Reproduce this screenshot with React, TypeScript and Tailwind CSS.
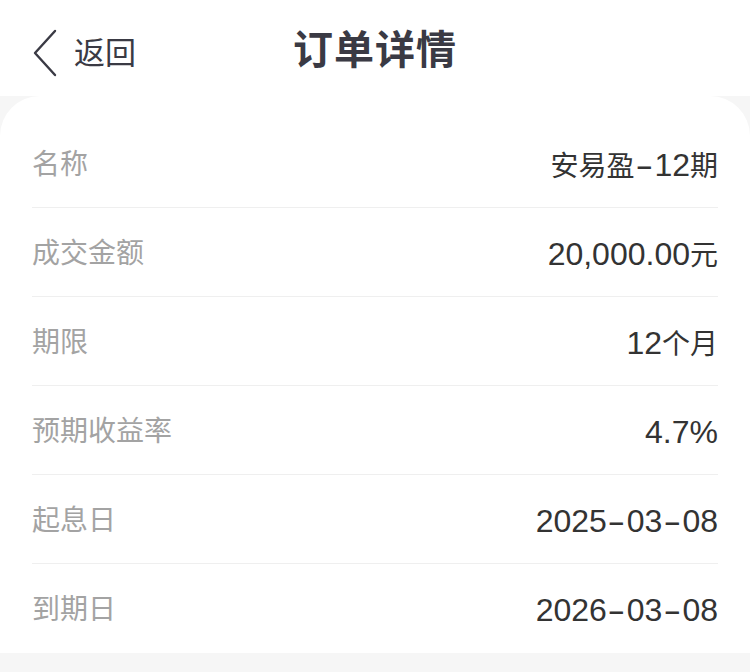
import React from "react";

type Seg = { t: string; n?: boolean; d?: boolean };

const rows: { k: string; v: Seg[] }[] = [
  { k: "名称", v: [{ t: "安易盈" }, { t: "-", d: true }, { t: "12", n: true }, { t: "期" }] },
  { k: "成交金额", v: [{ t: "20,000.00", n: true }, { t: "元" }] },
  { k: "期限", v: [{ t: "12", n: true }, { t: "个月" }] },
  { k: "预期收益率", v: [{ t: "4.7%", n: true }] },
  {
    k: "起息日",
    v: [
      { t: "2025", n: true },
      { t: "-", d: true },
      { t: "03", n: true },
      { t: "-", d: true },
      { t: "08", n: true },
    ],
  },
  {
    k: "到期日",
    v: [
      { t: "2026", n: true },
      { t: "-", d: true },
      { t: "03", n: true },
      { t: "-", d: true },
      { t: "08", n: true },
    ],
  },
];

export default function App() {
  return (
    <div
      className="w-[750px] h-[672px] bg-[#f6f6f6] flex flex-col overflow-hidden"
      style={{ fontFamily: '"Liberation Sans", "Noto Sans CJK SC", sans-serif' }}
    >
      <div className="h-[96px] bg-white relative flex items-center shrink-0">
        <div className="flex items-center pl-[32px] gap-[16px] pt-[10px]">
          <svg width="26" height="48" viewBox="0 0 26 48" className="text-[#3a3a44]">
            <path d="M23 2 L3 24 L23 46" fill="none" stroke="currentColor" strokeWidth="2.4" strokeLinecap="round" strokeLinejoin="round" />
          </svg>
          <span className="text-[31px] text-[#3a3a44] leading-none">返回</span>
        </div>
        <div className="absolute left-0 right-0 top-0 h-[96px] flex items-center justify-center pointer-events-none">
          <span className="text-[40px] font-bold text-[#3a3a44] leading-none tracking-[1px] pt-[4px]">订单详情</span>
        </div>
      </div>
      <div className="bg-white rounded-t-[40px] pt-[23px] px-[32px]">
        {rows.map((r, i) => (
          <div
            key={r.k}
            className={
              "h-[89px] flex items-center justify-between pt-[3px] " +
              (i < rows.length - 1 ? "border-b border-[#efefef]" : "")
            }
          >
            <span className="text-[28px] text-[#a3a3a3]">{r.k}</span>
            <span className="text-[28px] text-[#333333] flex items-baseline">
              {r.v.map((s, j) =>
                s.d ? (
                  <span key={j} className="text-[32px] inline-block w-[20px] text-center">
                    <span className="inline-block scale-x-[1.7]">{s.t}</span>
                  </span>
                ) : (
                  <span key={j} className={s.n ? "text-[32px]" : ""}>
                    {s.t}
                  </span>
                )
              )}
            </span>
          </div>
        ))}
      </div>
    </div>
  );
}
